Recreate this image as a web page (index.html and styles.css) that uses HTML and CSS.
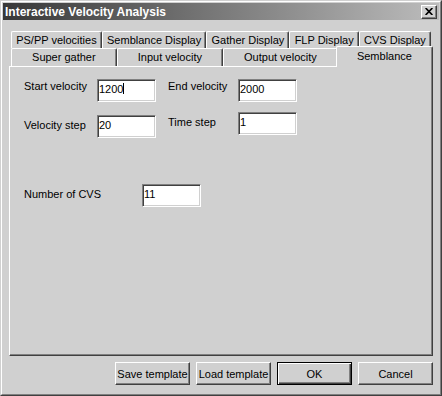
FILE: index.html
```html
<!DOCTYPE html>
<html lang="en">
<head>
<meta charset="UTF-8" />
<meta name="viewport" content="width=device-width, initial-scale=1" />
<title>Interactive Velocity Analysis</title>
<link rel="stylesheet" href="styles.css">
</head>
<body>

<div class="window">
  <div class="frame">
    <div class="titlebar">
      <span class="title">Interactive Velocity Analysis</span>
      <button class="close-btn" aria-label="Close">
        <svg width="8" height="7" viewBox="0 0 8 7">
          <path d="M0.6 0 L7.4 7 M7.4 0 L0.6 7" stroke="#000" stroke-width="1.7" fill="none" />
        </svg>
      </button>
    </div>

    <div class="content">
      <div class="tabs">
        <div class="tab-row back">
          <div class="tab">PS/PP velocities</div>
          <div class="tab">Semblance Display</div>
          <div class="tab">Gather Display</div>
          <div class="tab">FLP Display</div>
          <div class="tab">CVS Display</div>
        </div>
        <div class="tab-row front">
          <div class="tab">Super gather</div>
          <div class="tab">Input velocity</div>
          <div class="tab">Output velocity</div>
          <div class="tab selected">Semblance</div>
        </div>
      </div>

      <div class="panel">
        <div class="fields">
          <div class="field-col left">
            <div class="field">
              <label class="lbl top">Start velocity</label>
              <span class="edit-wrap">
                <input class="edit" type="text" value="1200" />
                <span class="caret"></span>
              </span>
            </div>
            <div class="field">
              <label class="lbl">Velocity step</label>
              <input class="edit" type="text" value="20" />
            </div>
          </div>
          <div class="field-col right">
            <div class="field">
              <label class="lbl top">End velocity</label>
              <input class="edit" type="text" value="2000" />
            </div>
            <div class="field">
              <label class="lbl">Time step</label>
              <input class="edit" type="text" value="1" />
            </div>
          </div>
        </div>

        <div class="field cvs">
          <label class="lbl">Number of CVS</label>
          <input class="edit" type="text" value="11" />
        </div>
      </div>

      <div class="buttons">
        <button class="btn">Save template</button>
        <button class="btn">Load template</button>
        <button class="btn default">OK</button>
        <button class="btn">Cancel</button>
      </div>
    </div>
  </div>
</div>

</body>
</html>
```

FILE: styles.css
```css
* {
  box-sizing: border-box;
}
body {
  margin: 0;
  background: #d0d0d0;
  font-family: "Liberation Sans", Arial, sans-serif;
  font-size: 11px;
  color: #000;
}
.window {
  width: 442px;
  height: 396px;
  background: #d0d0d0;
  border: 1px solid;
  border-color: #d0d0d0 #404040 #404040 #d0d0d0;
}
.frame {
  height: 100%;
  border: 1px solid;
  border-color: #fff #808080 #808080 #fff;
  padding: 1px;
  display: flex;
  flex-direction: column;
}
.titlebar {
  height: 18px;
  display: flex;
  align-items: center;
  justify-content: space-between;
  padding: 0 2px;
  background: linear-gradient(to right, #383838, #bcbcbc);
}
.title {
  color: #fff;
  font-weight: bold;
  font-size: 12px;
  white-space: nowrap;
}
.close-btn {
  width: 16px;
  height: 14px;
  padding: 0;
  display: flex;
  align-items: center;
  justify-content: center;
  background: #d0d0d0;
  border: 1px solid;
  border-color: #fff #404040 #404040 #fff;
  box-shadow: inset -1px -1px #808080;
}
.content {
  flex: 1;
  padding: 11px 6px 8px;
  display: flex;
  flex-direction: column;
}
.tabs {
  padding: 0 2px;
}
.tab-row {
  display: flex;
}
.tab-row.back {
  height: 17px;
}
.tab-row.front {
  height: 18px;
}
.tab {
  flex: 1 1 auto;
  min-width: 0;
  padding: 2px 2px 0;
  line-height: 13px;
  text-align: center;
  white-space: nowrap;
  background: #d0d0d0;
  border-top: 1px solid #fff;
  border-left: 1px solid #fff;
  border-right: 1px solid #404040;
  box-shadow: inset -1px 0 #808080;
  border-radius: 2px 2px 0 0;
}
.tab.selected {
  position: relative;
  z-index: 1;
  height: 21px;
  margin: -2px -2px 0;
  padding-top: 3px;
}
.panel {
  height: 290px;
  border: 1px solid;
  border-color: #fff #404040 #404040 #fff;
  box-shadow: inset -1px -1px #808080;
  padding: 12px 0 0 14px;
}
.fields {
  display: flex;
  gap: 12px;
}
.field-col {
  display: flex;
  flex-direction: column;
}
.field-col.left {
  gap: 13px;
}
.field-col.right {
  gap: 10px;
}
.field {
  display: flex;
  align-items: flex-start;
}
.lbl {
  line-height: 13px;
  margin-top: 4px;
  white-space: nowrap;
}
.lbl.top {
  margin-top: 1px;
}
.left .lbl {
  width: 73px;
}
.right .lbl {
  width: 70px;
}
.cvs {
  margin-top: 46px;
}
.cvs .lbl {
  width: 118px;
}
.edit-wrap {
  position: relative;
  display: flex;
}
.edit {
  width: 59px;
  height: 23px;
  padding: 0 1px 3px;
  font: inherit;
  color: #000;
  background: #fff;
  border: 1px solid;
  border-color: #808080 #fff #fff #808080;
  box-shadow: inset 1px 1px #404040, inset -1px -1px #d0d0d0;
  outline: none;
}
.caret {
  position: absolute;
  left: 26px;
  top: 4px;
  width: 1px;
  height: 11px;
  background: #000;
}
.buttons {
  display: flex;
  justify-content: flex-end;
  gap: 6px;
  margin-top: 6px;
}
.btn {
  width: 75px;
  height: 23px;
  padding: 0;
  font: inherit;
  color: #000;
  background: #d0d0d0;
  border: 1px solid;
  border-color: #fff #404040 #404040 #fff;
  box-shadow: inset -1px -1px #808080;
}
.btn.default {
  border-color: #000;
  box-shadow: inset 1px 1px #fff, inset -1px -1px #404040, inset -2px -2px #808080;
}
```
